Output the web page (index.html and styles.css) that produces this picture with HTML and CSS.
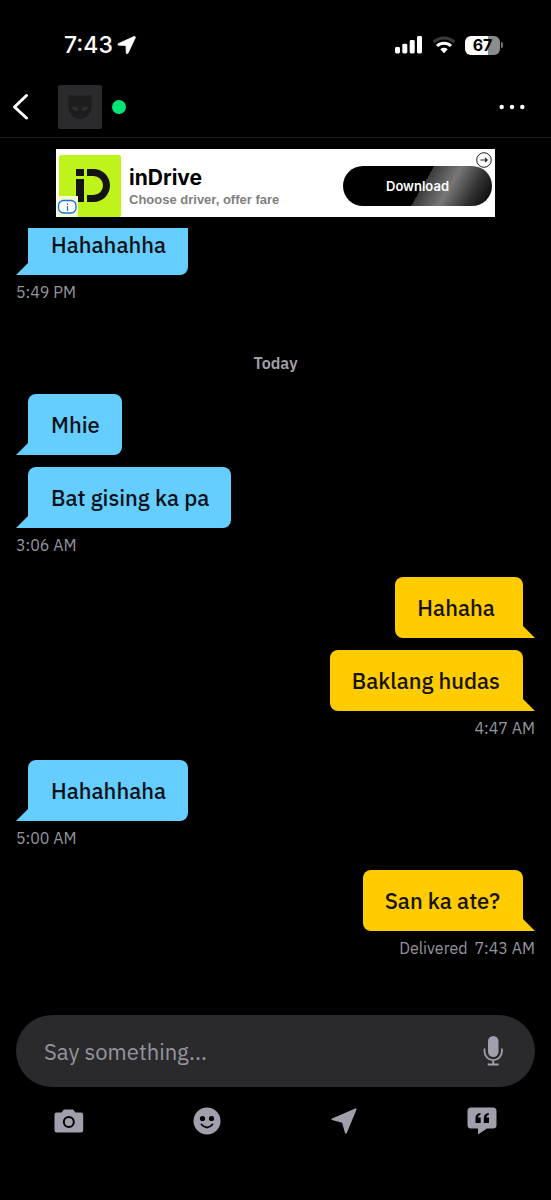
FILE: index.html
```html
<!DOCTYPE html>
<html lang="en">
<head>
<meta charset="utf-8">
<meta name="viewport" content="width=device-width, initial-scale=1">
<title>Chat</title>
<link rel="stylesheet" href="styles.css">
</head>
<body class="screen">
  <div class="status">
    <div class="status-left">
      <span class="clock">7:43</span>
      <svg width="20" height="20" viewBox="0 0 20 20" aria-hidden="true"><path d="M17 1.600 1.800 8.400c-1.200.6-1 1.700.2 1.800l7 .2.2 7.300c.1 1.200 1.300 1.400 1.900.2L18.300 2.700c.3-.8-.4-1.500-1.300-1.100z" fill="#fff" stroke="#fff" stroke-width=".8" stroke-linejoin="round"/></svg>
    </div>
    <div class="status-right">
      <svg width="28" height="18" viewBox="0 0 28 18" aria-hidden="true" fill="#fff"><rect x="0" y="11" width="5" height="6.500" rx="1.400"/><rect x="7.300" y="7.700" width="5" height="9.800" rx="1.400"/><rect x="14.700" y="4" width="5" height="13.500" rx="1.400"/><rect x="22" y="0" width="5" height="17.500" rx="1.400"/></svg>
      <svg width="24" height="18" viewBox="0 0 24 18" aria-hidden="true" fill="none" stroke-width="3"><path d="M1.700 6.200a15 15 0 0 1 20.600 0" stroke="#3c3c3c"/><path d="M5 10a10.200 10.200 0 0 1 14 0" stroke="#fff"/><path d="M12 17.200l-3.700-3.900a5.400 5.400 0 0 1 7.400 0z" fill="#fff" stroke="none"/></svg>
      <div class="battery"><span class="battery-body">67</span><span class="battery-tip"></span></div>
    </div>
  </div>

  <header class="header">
    <button class="icon-btn" aria-label="Back"><svg width="17" height="28" viewBox="0 0 17 28" fill="none" stroke="#fff" stroke-width="3" stroke-linecap="round" stroke-linejoin="round"><path d="M14.500 2.500 2.500 14 14.500 25"/></svg></button>
    <button class="avatar" aria-label="Profile"><svg width="24" height="26" viewBox="0 0 24 26"><path d="M.5 1q5 1 11.500.6Q18.500 2 23.500 1v11c0 7-4.500 13-11.500 13S.5 19 .5 12z" fill="#1d1d1e"/><path d="M4 12.500c3-.5 6 .8 6.300 3.800-3 1.500-6 0-6.300-3.800zM20 12.500c-3-.5-6 .8-6.300 3.800 3 1.500 6 0 6.300-3.800z" fill="#303032"/></svg></button>
    <span class="online"></span>
    <button class="icon-btn more" aria-label="More options"><svg width="26" height="6" viewBox="0 0 26 6" fill="#fff"><circle cx="2.700" cy="3" r="2.200"/><circle cx="13" cy="3" r="2.200"/><circle cx="23.300" cy="3" r="2.200"/></svg></button>
  </header>

  <section class="ad" aria-label="Advertisement">
    <div class="ad-logo">
      <svg width="34" height="34" viewBox="0 0 34 34" aria-hidden="true" fill="#141414"><path d="M0 0h8v7H0zM0 10h8v23H0zM11 0h6.500a16.500 16.500 0 0 1 0 33H11v-7h6.500a9.500 9.500 0 0 0 0-19H11z"/></svg>
      <svg class="ad-info" width="21" height="21" viewBox="0 0 21 21" aria-hidden="true"><path d="M0 0h21v21H0z" fill="#f1fbcf"/><rect x="1.500" y="4.500" width="17.500" height="12.500" rx="5" fill="#fff" stroke="#1b6fdd" stroke-width="1.300"/><path d="M10.500 7.500v1.500M10.500 10v5" stroke="#1b6fdd" stroke-width="1.200"/></svg>
    </div>
    <div class="ad-copy">
      <strong class="ad-title">inDrive</strong>
      <span class="ad-sub">Choose driver, offer fare</span>
    </div>
    <button class="ad-cta">Download</button>
    <svg class="ad-choice" width="16" height="16" viewBox="0 0 16 16" aria-hidden="true"><circle cx="8" cy="8" r="7.300" fill="#fff" stroke="#222" stroke-width="1"/><path d="M4.500 8h6.500M9 6l2.200 2L9 10" fill="none" stroke="#222" stroke-width="1.100"/></svg>
  </section>

  <main class="chat">
    <div class="group first">
      <p class="bubble">Hahahahha</p>
      <time class="time">5:49 PM</time>
    </div>
    <h2 class="day">Today</h2>
    <div class="group">
      <p class="bubble">Mhie</p>
      <p class="bubble">Bat gising ka pa</p>
      <time class="time">3:06 AM</time>
    </div>
    <div class="group mine">
      <p class="bubble">Hahaha&nbsp;</p>
      <p class="bubble">Baklang hudas</p>
      <time class="time">4:47 AM</time>
    </div>
    <div class="group">
      <p class="bubble">Hahahhaha</p>
      <time class="time">5:00 AM</time>
    </div>
    <div class="group mine">
      <p class="bubble">San ka ate?</p>
      <div class="time receipt"><span>Delivered</span><time>7:43 AM</time></div>
    </div>
  </main>

  <footer class="footer">
    <div class="composer">
      <input class="field" type="text" placeholder="Say something..." aria-label="Message">
      <button class="icon-btn" aria-label="Record voice"><svg width="20" height="30" viewBox="0 0 20 30"><rect x="5" y="0" width="10.500" height="21" rx="5.200" fill="#a09fab"/><path d="M1.500 12.500v3a8.700 8.700 0 0 0 17.400 0v-3M10.200 24v4M4.700 28.500h11" fill="none" stroke="#a09fab" stroke-width="1.800"/></svg></button>
    </div>
    <nav class="tools">
      <button class="icon-btn" aria-label="Camera"><svg width="30" height="24" viewBox="0 0 30 24"><path d="M10 .5h9l2.500 3H27a2.200 2.200 0 0 1 2.200 2.200v15.600a2.200 2.200 0 0 1-2.200 2.200H2.700a2.200 2.200 0 0 1-2.200-2.200V5.700a2.200 2.200 0 0 1 2.200-2.200h4.800z" fill="#a09fab"/><circle cx="14.800" cy="13" r="5" fill="none" stroke="#000" stroke-width="2"/></svg></button>
      <button class="icon-btn" aria-label="Stickers"><svg width="28" height="28" viewBox="0 0 28 28"><circle cx="14" cy="14" r="13.500" fill="#a09fab"/><circle cx="9.500" cy="11.500" r="2.600"/><circle cx="18.500" cy="11.500" r="2.600"/><path d="M8.500 17.500q5.500 6 11 0" fill="none" stroke="#000" stroke-width="1.800" stroke-linecap="round"/></svg></button>
      <button class="icon-btn" aria-label="Share location"><svg width="26" height="26" viewBox="0 0 26 26"><path d="M24.300.5 1 10.500c-.8.4-.7 1.300.1 1.500l10 2.700 2.900 10.200c.3.900 1.400 1 1.800.1L25.500 1.500c.2-.7-.4-1.200-1.200-1z" fill="#a09fab"/></svg></button>
      <button class="icon-btn" aria-label="Saved phrases"><svg width="30" height="28" viewBox="0 0 30 28"><path d="M4 .5h22A3.500 3.500 0 0 1 29.500 4v14a3.500 3.500 0 0 1-3.500 3.500h-6L11 27.500v-6H4A3.500 3.500 0 0 1 .5 18V4A3.500 3.500 0 0 1 4 .5z" fill="#a09fab"/><path d="M8.500 16V11q0-4.500 5-5v1.800q-2.500.5-2.500 2.700h2.700V16zM16.800 16V11q0-4.500 5-5v1.800q-2.500.5-2.500 2.700H22V16z"/></svg></button>
    </nav>
  </footer>
</body>
</html>
```
FILE: styles.css
```css
* { box-sizing: border-box; }

.screen {
  margin: 0;
  min-height: 100vh;
  display: flex;
  flex-direction: column;
  background: #000;
  color: #fff;
  font-family: "IBM Plex Sans", "Noto Sans", sans-serif;
}

button {
  padding: 0;
  border: 0;
  background: none;
  color: inherit;
  font: inherit;
}

svg { display: block; }

.icon-btn { display: flex; align-items: center; justify-content: center; }

.status {
  display: flex;
  justify-content: space-between;
  align-items: center;
  height: 77px;
  padding: 13px 48px 0 64px;
  font-family: Inter, sans-serif;
}

.status-left { display: flex; align-items: center; gap: 4px; }
.clock { font-size: 23px; line-height: 28px; font-weight: 500; }
.status-right { display: flex; align-items: center; gap: 9px; }
.battery { display: flex; align-items: center; gap: 1px; }

.battery-body {
  width: 35px;
  border-radius: 6px;
  background: linear-gradient(90deg, #fff 67%, #8c8c8c 67%);
  color: #000;
  font-size: 16px;
  line-height: 19px;
  font-weight: 700;
  text-align: center;
}

.battery-tip { width: 2px; height: 6px; border-radius: 0 2px 2px 0; background: #777; }

.header {
  display: flex;
  align-items: center;
  height: 61px;
  padding: 0 26px 0 12px;
  border-bottom: 1px solid #1d1d1f;
}

.avatar {
  display: flex;
  align-items: center;
  justify-content: center;
  width: 44px;
  height: 44px;
  margin-left: 29px;
  border-radius: 2px;
  background: #2b2b2d;
}

.online { width: 14px; height: 14px; margin-left: 10px; border-radius: 50%; background: #00e676; }
.more { margin-left: auto; }

.ad {
  position: relative;
  display: flex;
  align-items: flex-end;
  align-self: center;
  width: calc(100% - 112px);
  height: 68px;
  margin: 11px 0;
  padding: 0 3px;
  background: #fff;
  color: #000;
  font-family: "Liberation Sans", Arial, sans-serif;
}

.ad-logo {
  position: relative;
  display: flex;
  flex: none;
  align-items: center;
  justify-content: center;
  width: 62px;
  height: 62px;
  padding-left: 6px;
  border-radius: 2px;
  background: #bff31c;
}

.ad-info { position: absolute; left: -2px; bottom: 0; }
.ad-copy { display: flex; flex-direction: column; margin: 0 0 7px 8px; white-space: nowrap; }
.ad-title { font-family: Inter, sans-serif; font-size: 21px; line-height: 24px; font-weight: 700; }
.ad-sub { color: #808080; font-size: 13px; line-height: 20px; font-weight: 700; }

.ad-cta {
  flex: none;
  width: 149px;
  height: 40px;
  margin: 0 0 11px auto;
  border-radius: 20px;
  background: linear-gradient(120deg, #000 53%, #3a3a3a 53%, #777 69%, #333 84%, #0c0c0c 96%);
  color: #fff;
  font-family: Inter, sans-serif;
  font-size: 13px;
  font-weight: 600;
}

.ad-choice { position: absolute; top: 3px; right: 3px; }

.chat {
  flex: 1;
  overflow: hidden;
  display: flex;
  flex-direction: column;
  gap: 23px;
  padding: 0 16px;
}

.group { display: flex; flex-direction: column; align-items: flex-start; gap: 12px; }
.group.mine { align-items: flex-end; }
.group.first { margin-top: -14px; }

.bubble {
  position: relative;
  margin: 0 12px;
  padding: 15px 22px 15px 23px;
  border-radius: 8px 8px 8px 0;
  background: #66ceff;
  color: #0b1217;
  font-size: 22px;
  line-height: 31px;
  font-weight: 500;
}

.bubble::before {
  content: "";
  position: absolute;
  bottom: 0;
  right: 100%;
  width: 12px;
  height: 12px;
  background: inherit;
  clip-path: polygon(100% 0, 100% 100%, 0 100%);
}

.mine .bubble {
  padding: 15px 23px 15px 22px;
  border-radius: 8px 8px 0 8px;
  background: #ffcc00;
  color: #171200;
}

.mine .bubble::before { right: auto; left: 100%; clip-path: polygon(0 0, 100% 100%, 0 100%); }

.time { margin-top: -4px; color: #96959e; font-size: 16px; line-height: 18px; }
.receipt { display: flex; gap: 7px; }

.day {
  margin: 27px 0 -4px;
  color: #a09fa8;
  font-size: 16px;
  line-height: 24px;
  font-weight: 600;
  text-align: center;
}

.footer { padding-bottom: 60px; }

.composer {
  display: flex;
  align-items: center;
  height: 72px;
  margin: 0 16px 15px;
  padding: 0 32px 0 28px;
  border-radius: 36px;
  background: #2a2a2c;
}

.field {
  flex: 1;
  min-width: 0;
  padding: 0;
  border: 0;
  outline: 0;
  background: none;
  color: #fff;
  font-family: inherit;
  font-size: 22px;
}

.field::placeholder { color: #96959e; opacity: 1; }

.tools { display: grid; grid-template-columns: repeat(4, 1fr); height: 38px; }
```
